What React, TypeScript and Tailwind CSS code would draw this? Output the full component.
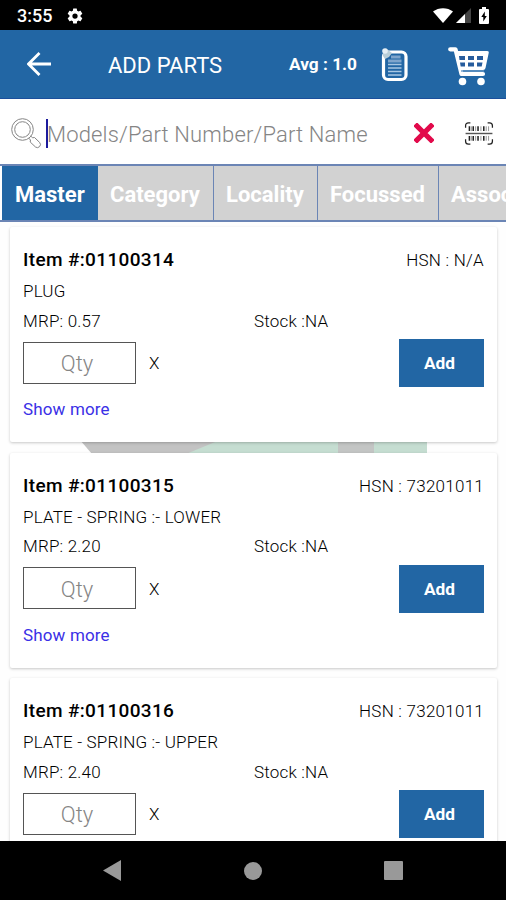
type Part = {
  item: string;
  hsn: string;
  name: string;
  mrp: string;
};

const parts: Part[] = [
  { item: '01100314', hsn: 'N/A', name: 'PLUG', mrp: '0.57' },
  { item: '01100315', hsn: '73201011', name: 'PLATE - SPRING :- LOWER', mrp: '2.20' },
  { item: '01100316', hsn: '73201011', name: 'PLATE - SPRING :- UPPER', mrp: '2.40' },
];

const tabs = [
  { label: 'Category', width: 'w-[116px]' },
  { label: 'Locality', width: 'w-[104px]' },
  { label: 'Focussed', width: 'w-[121px]' },
  { label: 'Associated', width: 'w-[140px]' },
];

function StatusBar() {
  return (
    <div className="flex h-[30px] shrink-0 items-center bg-black text-white">
      <span className="ml-[17px] mt-[2px] w-[49px] text-[18px] font-medium leading-[30px]">3:55</span>
      <svg className="mt-px h-[18px] w-[18px] fill-white" viewBox="0 0 24 24">
        <path d="M19.4 13a7.500 7.500 0 0 0 0-2l2.100-1.700c.2-.1.3-.4.1-.6l-2-3.500c-.1-.2-.4-.3-.6-.2l-2.500 1a7 7 0 0 0-1.700-1L14.400 2.400A.5.5 0 0 0 14 2h-4a.5.5 0 0 0-.5.4L9.200 5a7.600 7.600 0 0 0-1.700 1L5 5c-.2-.1-.5 0-.6.2l-2 3.500c-.1.2-.1.5.1.6L4.600 11a8 8 0 0 0 0 2l-2.100 1.700c-.2.1-.3.4-.1.6l2 3.500c.1.2.4.3.6.2l2.500-1a7 7 0 0 0 1.700 1l.3 2.600c.1.2.3.4.5.4h4c.2 0 .5-.2.5-.4l.3-2.600a7.600 7.600 0 0 0 1.700-1l2.500 1c.2.1.5 0 .6-.2l2-3.500c.1-.2.1-.5-.1-.6zM12 15.500a3.500 3.500 0 1 1 0-7 3.500 3.500 0 0 1 0 7z" />
      </svg>
      <svg className="ml-auto mr-[3px] h-[15px] w-[20px] fill-white" viewBox="0 0 20 15">
        <path d="M0 3.500C5.500-1 14.500-1 20 3.500L10 15z" />
      </svg>
      <svg className="mr-2 h-[15px] w-[15px]" viewBox="0 0 15 15">
        <path d="M15 0v15H0z" fill="#444" />
        <path d="M9 6v9H0z" fill="#fff" />
      </svg>
      <svg className="mr-[17px] h-[17px] w-[10px]" viewBox="0 0 10 17">
        <path d="M3 0h4v2h2q1 0 1 1v13q0 1-1 1H1q-1 0-1-1V3q0-1 1-1h2z" fill="#fff" />
        <path d="M5.800 4.500L2.300 10h2v4.500L7.800 9h-2z" fill="#000" />
      </svg>
    </div>
  );
}

function Header() {
  return (
    <div className="flex h-[69px] shrink-0 items-center border-b border-[#1b4f9c] bg-[#2266a4] text-white">
      <svg className="ml-[27px] h-[24px] w-[24px]" viewBox="0 0 24 24" fill="none" stroke="#fff" strokeWidth="2.800">
        <path d="M24 12H2M12.500 1L1.500 12l11 11" />
      </svg>
      <h1 className="ml-[57px] mt-[3px] w-[181px] whitespace-nowrap text-[22px] leading-[30px]">ADD PARTS</h1>
      <span className="mt-[2px] w-[92px] whitespace-nowrap text-[17.300px] font-bold">Avg : 1.0</span>
      <svg className="mt-[2px] h-[34px] w-[27px]" viewBox="0 0 27 34" fill="none">
        <rect x="2.500" y="4" width="22.500" height="27.500" rx="4.500" stroke="#fff" strokeWidth="3.200" />
        <path d="M10 9h9.500M7 13h13.500" stroke="#7fa5cc" strokeWidth="3" />
        <path d="M7 16.500h13.500M7 20h13.500M7 23.500h13.500M7 27h13.500" stroke="#a9c7e2" strokeWidth="1.500" />
        <path d="M2 3l3-2.500 6 4.500-3 4-4 2-2-3z" fill="#b9ced8" />
        <circle cx="4" cy="3" r="2.800" fill="#e6eff5" />
      </svg>
      <svg className="ml-[40px] mt-[5px] h-[39px] w-[41px]" viewBox="0 0 41 39">
        <path d="M2.200 2.300h5.300L13.500 27h21.500" fill="none" stroke="#fff" strokeWidth="4.200" strokeLinecap="round" strokeLinejoin="round" />
        <path d="M8 4h31q2.200 0 1.700 2L37.500 21q-.4 2-2.500 2H12.500z" fill="#fff" />
        <path d="M11 9h6v4h-5.500zM20 9h6v4h-6zM29 9h6v4h-6zM12 15.500h5v4h-4.300zM20 15.500h6v4h-6zM29 15.500h5.500l-.8 4H29z" fill="#265c9d" />
        <path d="M13 24h23" stroke="#6c9bc9" strokeWidth="1.400" />
        <circle cx="14.500" cy="34.500" r="3.800" fill="#fff" />
        <circle cx="33" cy="34.500" r="3.800" fill="#fff" />
      </svg>
    </div>
  );
}

function SearchBar() {
  return (
    <div className="flex h-[65px] shrink-0 items-center bg-white">
      <svg className="ml-[11px] mt-[3px] h-[31px] w-[31px]" viewBox="0 0 31 31" fill="none" stroke="#858585" strokeWidth="1">
        <circle cx="11.500" cy="11.500" r="10.800" />
        <circle cx="11.500" cy="11.500" r="7.800" />
        <path d="M17.500 20l2 2-.3 2 5.300 5q2 1.500 4-.3 2-2 .2-4.200l-5.200-5-2 .3-2-2" />
      </svg>
      <span className="ml-[4px] mt-[4px] h-[29px] w-[2px] bg-[#1d1b9c]" />
      <span className="-ml-px mt-[6px] w-[367px] whitespace-nowrap text-[22px] font-light tracking-[0.160px] text-[#858585]">
        Models/Part Number/Part Name
      </span>
      <svg className="mt-[3px] h-[20px] w-[20px]" viewBox="0 0 20 20" stroke="#e20a4b" strokeWidth="5.200">
        <path d="M3 3l14 14M17 3L3 17" strokeLinecap="square" strokeLinejoin="round" />
      </svg>
      <svg className="ml-[30px] mt-[4px] h-[23px] w-[30px]" viewBox="0 0 30 24" fill="none" stroke="#222">
        <path d="M1 6V4q0-3 3-3h2M24 1h2q3 0 3 3v2M1 18v2q0 3 3 3h2M24 23h2q3 0 3-3v-2" strokeWidth="1.300" />
        <path d="M1 12h28" strokeWidth="1.500" stroke="#555" />
        <path d="M5 4.500v5M9 4.500v5M14 4.500v5M20 4.500v5M5 14.500v5M9 14.500v5M14 14.500v5M20 14.500v5" strokeWidth="1.600" />
        <path d="M7 4.500v5M11.500 4.500v5M17 4.500v5M22.500 4.500v5M25 4.500v5M7 14.500v5M11.500 14.500v5M17 14.500v5M22.500 14.500v5M25 14.500v5" strokeWidth="0.800" stroke="#777" />
      </svg>
    </div>
  );
}

function Tabs() {
  return (
    <div className="flex h-[58px] shrink-0 overflow-hidden border-y-2 border-[#6b85b5] bg-white pl-[2px] text-[22px] font-bold text-white">
      <div className="flex w-[96px] shrink-0 items-center bg-[#2266a4] pl-[13px] pt-[2px]">Master</div>
      {tabs.map((tab) => (
        <div
          key={tab.label}
          className={`flex shrink-0 items-center border-r-[1.500px] border-[#6b85b5] bg-[#d2d2d2] pl-[12px] pt-[2px] ${tab.width}`}
        >
          {tab.label}
        </div>
      ))}
    </div>
  );
}

function PartCard({ part }: { part: Part }) {
  return (
    <div className="h-[215px] shrink-0 rounded-[2px] bg-white px-[13px] pt-[20px] text-[17px] font-light text-black shadow-[0_1px_3px_rgba(0,0,0,0.22)]">
      <div className="flex h-[27px] items-center justify-between">
        <span className="text-[19px] font-medium tracking-[0.350px]">Item #:{part.item}</span>
        <span className="pt-[1px] tracking-[0.250px]">HSN : {part.hsn}</span>
      </div>
      <div className="flex h-[34px] items-center pt-[2px] tracking-[0.180px]">{part.name}</div>
      <div className="flex h-[27px] items-center tracking-[0.200px]">
        <span className="w-[231px]">MRP: {part.mrp}</span>
        <span>Stock :NA</span>
      </div>
      <div className="mt-[4px] flex h-[48px] items-center">
        <div className="mt-[-1px] flex h-[42px] w-[113px] items-center justify-center border border-[#555] pr-[5px] pt-[2px] text-[22px] text-[#858585]">
          Qty
        </div>
        <span className="ml-[13px] pt-[2px] text-black">X</span>
        <button type="button" className="ml-auto h-[48px] w-[85px] bg-[#2266a4] pr-[4px] pt-[2px] text-[17.300px] font-bold text-white">
          Add
        </button>
      </div>
      <div className="mt-[9px] leading-[26px] font-normal tracking-[0.150px] text-[#3a30e6]">Show more</div>
    </div>
  );
}

function PartList() {
  return (
    <div className="relative flex min-h-0 flex-1 flex-col gap-[10.500px] overflow-hidden bg-[#fefefe] pl-[10px] pr-[9px] pt-[5px] [&>div]:relative">
      <svg className="absolute left-[80px] top-[218px] h-[14px] w-[348px]" viewBox="0 0 348 14">
        <path d="M0 0h140l-24 14H12z" fill="#c3c3c3" />
        <path d="M140 0h207v14H106z" fill="#c5ddd1" />
        <path d="M258 0h36v14h-36z" fill="#c3c5c4" />
      </svg>
      {parts.map((part) => (
        <PartCard key={part.item} part={part} />
      ))}
    </div>
  );
}

function NavigationBar() {
  return (
    <div className="flex h-[59px] shrink-0 items-center bg-black">
      <svg className="ml-[103px] h-[21px] w-[18px] fill-[#999]" viewBox="0 0 18 21">
        <path d="M18 0v21L0 10.500z" />
      </svg>
      <span className="ml-[123px] h-[18px] w-[18px] rounded-full bg-[#999]" />
      <span className="ml-[122px] h-[19px] w-[19px] rounded-[1px] bg-[#999]" />
    </div>
  );
}

export default function App() {
  return (
    <div className="flex h-[900px] w-[506px] flex-col overflow-hidden bg-white font-[Roboto,sans-serif]">
      <StatusBar />
      <Header />
      <SearchBar />
      <Tabs />
      <PartList />
      <NavigationBar />
    </div>
  );
}
